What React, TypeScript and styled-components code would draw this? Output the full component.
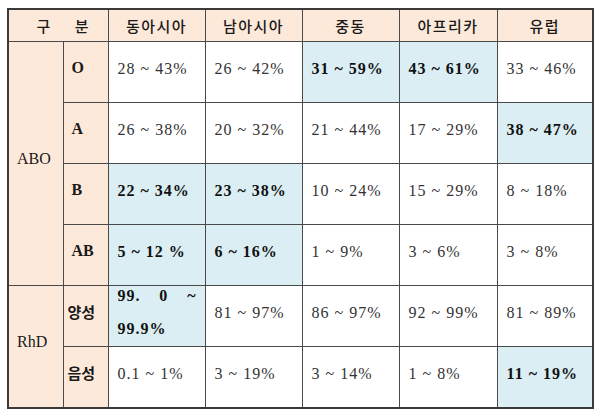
import React from "react";
import styled, { createGlobalStyle } from "styled-components";

const GlobalStyle = createGlobalStyle`
  html, body {
    margin: 0;
    padding: 0;
    background: #fff;
  }
  body {
    font-family: "Liberation Serif", "Noto Sans CJK KR", serif;
    color: #222;
  }
`;

const Page = styled.div`
  padding: 8px 0 0 7px;
`;

const Table = styled.table`
  border-collapse: collapse;
  table-layout: fixed;
  width: 587px;
  border: 2px solid #3a3a3a;
`;

const HeadCell = styled.th<{ $shift?: boolean }>`
  height: 31px;
  padding: 0 0 0 ${(p) => (p.$shift ? "10px" : "0")};
  background: #fde9d9;
  border: 1px solid #4a4a4a;
  font-family: "Noto Sans CJK KR", "Liberation Sans", sans-serif;
  font-weight: 500;
  font-size: 15px;
  letter-spacing: 1.5px;
  color: #1a1a1a;
  text-align: center;
  vertical-align: middle;
`;

const Spaced = styled.span`
  word-spacing: 18px;
`;

const LabelCell = styled.td<{ $korean?: boolean; $bold?: boolean }>`
  padding: 0 0 9px ${(p) => (p.$korean ? "4px" : "8px")};
  background: #fde9d9;
  border: 1px solid #4a4a4a;
  font-family: ${(p) =>
    p.$korean
      ? `"Noto Sans CJK KR", "Liberation Sans", sans-serif`
      : `"Liberation Serif", "Noto Sans CJK KR", serif`};
  font-weight: ${(p) => (p.$bold ? 700 : 400)};
  font-size: ${(p) => (p.$korean ? "15px" : "16px")};
  color: #1a1a1a;
  vertical-align: middle;
`;

const Cell = styled.td<{ $hl?: boolean }>`
  padding: 0 8px 0 9px;
  background: ${(p) => (p.$hl ? "#dbeef4" : "#fff")};
  border: 1px solid #4a4a4a;
  font-size: 16px;
  font-weight: ${(p) => (p.$hl ? 700 : 400)};
  color: ${(p) => (p.$hl ? "#111" : "#333")};
  letter-spacing: 1px;
  vertical-align: top;
`;

const Content = styled.div`
  height: 52px;
  display: flex;
  flex-direction: column;
  justify-content: center;
  line-height: 33px;
  white-space: nowrap;
`;

const JustLine = styled.div`
  display: flex;
  justify-content: space-between;
`;

const Row = styled.tr`
  height: 61px;
`;

type Val = { t: string; hl?: boolean };

const regions = ["동아시아", "남아시아", "중동", "아프리카", "유럽"];

const abo: { label: string; vals: Val[] }[] = [
  {
    label: "O",
    vals: [
      { t: "28 ~ 43%" },
      { t: "26 ~ 42%" },
      { t: "31 ~ 59%", hl: true },
      { t: "43 ~ 61%", hl: true },
      { t: "33 ~ 46%" },
    ],
  },
  {
    label: "A",
    vals: [
      { t: "26 ~ 38%" },
      { t: "20 ~ 32%" },
      { t: "21 ~ 44%" },
      { t: "17 ~ 29%" },
      { t: "38 ~ 47%", hl: true },
    ],
  },
  {
    label: "B",
    vals: [
      { t: "22 ~ 34%", hl: true },
      { t: "23 ~ 38%", hl: true },
      { t: "10 ~ 24%" },
      { t: "15 ~ 29%" },
      { t: "8 ~ 18%" },
    ],
  },
  {
    label: "AB",
    vals: [
      { t: "5 ~ 12 %", hl: true },
      { t: "6 ~ 16%", hl: true },
      { t: "1 ~ 9%" },
      { t: "3 ~ 6%" },
      { t: "3 ~ 8%" },
    ],
  },
];

const rhd: { label: string; vals: Val[] }[] = [
  {
    label: "양성",
    vals: [
      { t: "99.0 ~ 99.9%", hl: true },
      { t: "81 ~ 97%" },
      { t: "86 ~ 97%" },
      { t: "92 ~ 99%" },
      { t: "81 ~ 89%" },
    ],
  },
  {
    label: "음성",
    vals: [
      { t: "0.1 ~ 1%" },
      { t: "3 ~ 19%" },
      { t: "3 ~ 14%" },
      { t: "1 ~ 8%" },
      { t: "11 ~ 19%", hl: true },
    ],
  },
];

function ValueCell({ v }: { v: Val }) {
  // the 99.0 value wraps in the original, justified on its first line
  if (v.t === "99.0 ~ 99.9%") {
    return (
      <Cell $hl={v.hl}>
        <Content>
          <JustLine>
            <span>99.</span>
            <span>0</span>
            <span>~</span>
          </JustLine>
          <div>99.9%</div>
        </Content>
      </Cell>
    );
  }
  return (
    <Cell $hl={v.hl}>
      <Content>{v.t}</Content>
    </Cell>
  );
}

export default function App() {
  return (
    <Page>
      <GlobalStyle />
      <Table>
        <colgroup>
          <col style={{ width: 55 }} />
          <col style={{ width: 45 }} />
          <col style={{ width: 97 }} />
          <col style={{ width: 97 }} />
          <col style={{ width: 97 }} />
          <col style={{ width: 98 }} />
          <col style={{ width: 96 }} />
        </colgroup>
        <thead>
          <tr>
            <HeadCell colSpan={2} $shift>
              <Spaced>구 분</Spaced>
            </HeadCell>
            {regions.map((r) => (
              <HeadCell key={r}>{r}</HeadCell>
            ))}
          </tr>
        </thead>
        <tbody>
          {abo.map((row, i) => (
            <Row key={row.label}>
              {i === 0 && <LabelCell rowSpan={abo.length}>ABO</LabelCell>}
              <LabelCell $bold>{row.label}</LabelCell>
              {row.vals.map((v, j) => (
                <ValueCell key={j} v={v} />
              ))}
            </Row>
          ))}
          {rhd.map((row, i) => (
            <Row key={row.label}>
              {i === 0 && <LabelCell rowSpan={rhd.length}>RhD</LabelCell>}
              <LabelCell $korean $bold>
                {row.label}
              </LabelCell>
              {row.vals.map((v, j) => (
                <ValueCell key={j} v={v} />
              ))}
            </Row>
          ))}
        </tbody>
      </Table>
    </Page>
  );
}
